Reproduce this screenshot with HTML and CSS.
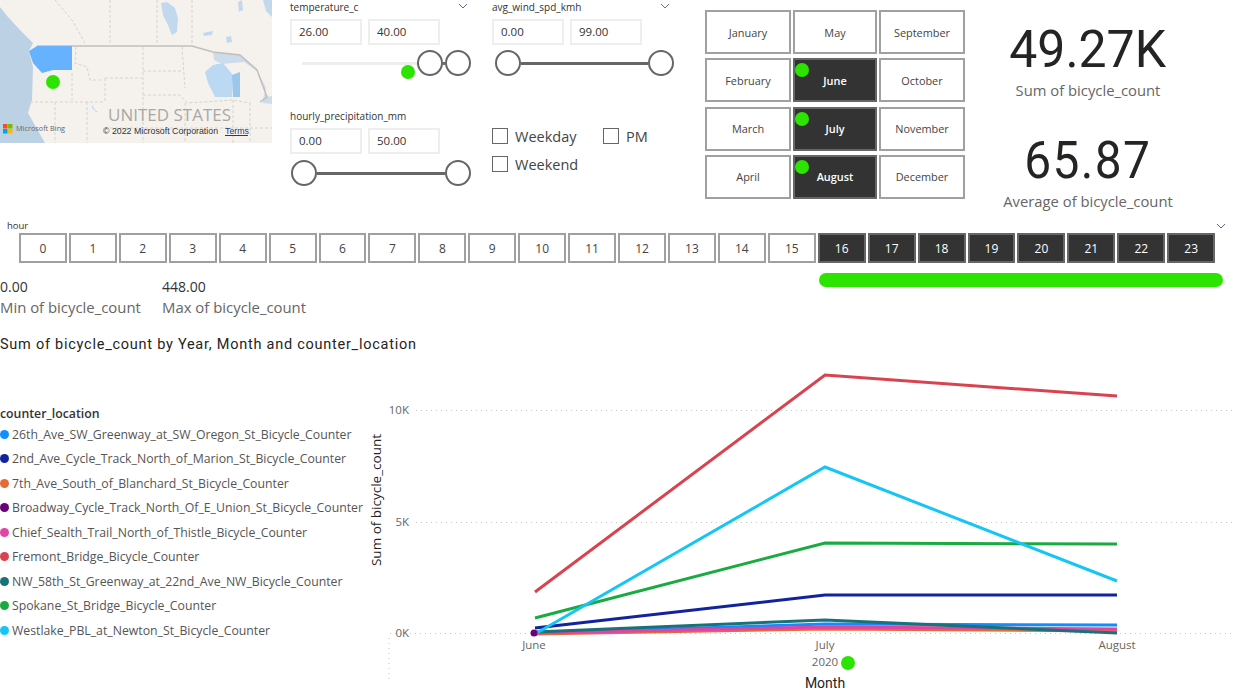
FILE: index.html
```html
<!DOCTYPE html>
<html lang="en">
<head>
<meta charset="utf-8">
<title>Bicycle counters</title>
<link rel="stylesheet" href="styles.css">
</head>
<body>
<div class="page">
  <section class="top">
    <div class="map">
      <svg class="map-svg" viewBox="0 0 272 143" width="272" height="143">
        <rect width="272" height="143" fill="#f5f2ee"/>
        <path d="M0 7 8 17 20 30 33 43 29 51 33 67 32 100 28 113 45 143H0Z" fill="#bdd1e4"/>
        <path d="M161 3l6-1 8 6 3 10-1 14-5 3-5-12-4-8ZM203 33l10-2-1 4-8 1ZM226 37l5-1 1 6-5 1ZM263 0h9V17l-6-6ZM238 2l4-2 1 10-4 2Z" fill="#c2d8ec"/>
        <path d="M213 52 240 55 257 70 267 97 272 96V104L262 103 266 88 258 72 244 62 222 64 214 60Z" fill="#ccdcea"/>
        <path d="M205 72 213 65 223 63 233 75 232 97 215 97 208 83Z" fill="#bcd9f3"/>
        <path d="M232 75 240 72 240 97 233 97Z" fill="#9cc7ec"/>
        <path d="M92 105l3 5 3 2-2 0-4-4Z" fill="#bcd6ee"/>
        <g class="map-lines">
          <path d="M55 0 72 20 85 43M110 0V44M157 0V44M192 0V44"/>
          <path d="M76 47 75 63 87 67 90 80H103M105 78V102M105 78H142M143 47V143M182 47 185 88M143 71H183"/>
          <path d="M143 95H180L187 103 233 100 250 103M30 102H103M55 102V143M87 102V143M72 73V100M185 103V143M233 100V143M250 103V143M105 128H272"/>
        </g>
        <path d="M37 46H192L213 52 240 55 257 70 267 97 260 102" fill="none" stroke="#c2beb9" stroke-width="1.500"/>
        <path d="M29 51 37 46H72V70H53L42 73 33 63Z" fill="#66b2ff"/>
        <text class="map-country" x="108" y="121">UNITED STATES</text>
        <rect x="3" y="124" width="4.500" height="4.500" fill="#f25022"/>
        <rect x="8" y="124" width="4.500" height="4.500" fill="#7fba00"/>
        <rect x="3" y="129" width="4.500" height="4.500" fill="#00a4ef"/>
        <rect x="8" y="129" width="4.500" height="4.500" fill="#ffb900"/>
        <text class="map-bing" x="16" y="131">Microsoft Bing</text>
        <text class="map-copy" x="103" y="134">© 2022 Microsoft Corporation</text>
        <text class="map-terms" x="225" y="134">Terms</text>
        <path d="M225 135.500H248" stroke="#1a3a8a" stroke-width="1"/>
      </svg>
      <span class="dot dot-map"></span>
    </div>

    <div class="filters">
      <div class="slicer">
        <div class="slicer-head"><span>temperature_c</span><svg class="chev" viewBox="0 0 10 6" width="10" height="6"><path d="M1 1l4 4 4-4" fill="none" stroke="#5a6a90"/></svg></div>
        <div class="inputs"><span class="input">26.00</span><span class="input">40.00</span></div>
        <div class="range range-temp">
          <span class="track track-idle"></span><span class="thumb"></span><span class="track track-short"></span><span class="thumb"></span>
          <span class="dot dot-temp"></span>
        </div>
      </div>
      <div class="slicer">
        <div class="slicer-head"><span>avg_wind_spd_kmh</span><svg class="chev" viewBox="0 0 10 6" width="10" height="6"><path d="M1 1l4 4 4-4" fill="none" stroke="#8a6a5a"/></svg></div>
        <div class="inputs"><span class="input">0.00</span><span class="input">99.00</span></div>
        <div class="range range-wind"><span class="thumb"></span><span class="track"></span><span class="thumb"></span></div>
      </div>
      <div class="slicer">
        <div class="slicer-head"><span>hourly_precipitation_mm</span></div>
        <div class="inputs"><span class="input">0.00</span><span class="input">50.00</span></div>
        <div class="range range-rain"><span class="thumb"></span><span class="track"></span><span class="thumb"></span></div>
      </div>
      <div class="checks">
        <label class="check check-weekday"><span class="box"></span>Weekday</label>
        <label class="check check-pm"><span class="box"></span>PM</label>
        <label class="check check-weekend"><span class="box"></span>Weekend</label>
      </div>
    </div>

    <div class="months">
      <div class="month">January</div><div class="month">May</div><div class="month">September</div>
      <div class="month">February</div><div class="month on">June<span class="dot dot-month"></span></div><div class="month">October</div>
      <div class="month">March</div><div class="month on">July<span class="dot dot-month"></span></div><div class="month">November</div>
      <div class="month">April</div><div class="month on">August<span class="dot dot-month"></span></div><div class="month">December</div>
    </div>

    <div class="kpis">
      <div class="kpi kpi-sum"><div class="kpi-value">49.27K</div><div class="kpi-label">Sum of bicycle_count</div></div>
      <div class="kpi kpi-avg"><div class="kpi-value">65.87</div><div class="kpi-label">Average of bicycle_count</div></div>
    </div>
  </section>

  <section class="hours">
    <div class="hours-head"><span>hour</span><svg class="chev" viewBox="0 0 10 6" width="10" height="6"><path d="M1 1l4 4 4-4" fill="none" stroke="#5a6a90"/></svg></div>
    <div class="hour-row">
      <div class="hour">0</div><div class="hour">1</div><div class="hour">2</div><div class="hour">3</div>
      <div class="hour">4</div><div class="hour">5</div><div class="hour">6</div><div class="hour">7</div>
      <div class="hour">8</div><div class="hour">9</div><div class="hour">10</div><div class="hour">11</div>
      <div class="hour">12</div><div class="hour">13</div><div class="hour">14</div><div class="hour">15</div>
      <div class="hour on">16</div><div class="hour on">17</div><div class="hour on">18</div><div class="hour on">19</div>
      <div class="hour on">20</div><div class="hour on">21</div><div class="hour on">22</div><div class="hour on">23</div>
    </div>
  </section>

  <section class="mid">
    <div class="stat stat-min"><div class="stat-value">0.00</div><div class="stat-label">Min of bicycle_count</div></div>
    <div class="stat"><div class="stat-value">448.00</div><div class="stat-label">Max of bicycle_count</div></div>
    <div class="green-bar"></div>
  </section>

  <h2 class="chart-title">Sum of bicycle_count by Year, Month and counter_location</h2>

  <section class="chart">
    <div class="legend">
      <div class="legend-title">counter_location</div>
      <div class="legend-item"><i class="c1"></i>26th_Ave_SW_Greenway_at_SW_Oregon_St_Bicycle_Counter</div>
      <div class="legend-item"><i class="c2"></i>2nd_Ave_Cycle_Track_North_of_Marion_St_Bicycle_Counter</div>
      <div class="legend-item"><i class="c3"></i>7th_Ave_South_of_Blanchard_St_Bicycle_Counter</div>
      <div class="legend-item"><i class="c4"></i>Broadway_Cycle_Track_North_Of_E_Union_St_Bicycle_Counter</div>
      <div class="legend-item"><i class="c5"></i>Chief_Sealth_Trail_North_of_Thistle_Bicycle_Counter</div>
      <div class="legend-item"><i class="c6"></i>Fremont_Bridge_Bicycle_Counter</div>
      <div class="legend-item"><i class="c7"></i>NW_58th_St_Greenway_at_22nd_Ave_NW_Bicycle_Counter</div>
      <div class="legend-item"><i class="c8"></i>Spokane_St_Bridge_Bicycle_Counter</div>
      <div class="legend-item"><i class="c9"></i>Westlake_PBL_at_Newton_St_Bicycle_Counter</div>
    </div>
    <div class="plot">
      <svg class="plot-svg" viewBox="362 362 875 330" width="875" height="330">
        <g class="grid">
          <path d="M416 409.500H1232M416 521.500H1232M390 632.500H1232M389 637V680"/>
        </g>
        <text class="tick" x="409" y="413" text-anchor="end">10K</text>
        <text class="tick" x="409" y="525" text-anchor="end">5K</text>
        <text class="tick" x="409" y="636" text-anchor="end">0K</text>
        <text class="axis-y" transform="translate(381 499) rotate(-90)" text-anchor="middle">Sum of bicycle_count</text>
        <g class="lines">
          <polyline stroke="#118dff" points="535,632 825,623 1117,624"/>
          <polyline stroke="#e66c37" points="535,633 825,628 1117,630"/>
          <polyline stroke="#e044a7" points="535,632 825,626 1117,628"/>
          <polyline stroke="#d9434f" points="535,591 825,374 1117,395"/>
          <polyline stroke="#1aab40" points="535,617 825,542 1117,543"/>
          <polyline stroke="#12239e" points="535,627 825,594 1117,594"/>
          <polyline stroke="#197278" points="535,631 825,619 1117,632"/>
          <polyline stroke="#15c6f4" points="535,633 825,466 1117,580"/>
        </g>
        <circle cx="534" cy="632" r="3.500" fill="#6b007b"/>
        <text class="tick" x="534" y="648" text-anchor="middle">June</text>
        <text class="tick" x="825" y="648" text-anchor="middle">July</text>
        <text class="tick" x="1117" y="648" text-anchor="middle">August</text>
        <text class="tick" x="825" y="665" text-anchor="middle">2020</text>
        <circle cx="848" cy="662" r="7" fill="#2de400"/>
        <text class="axis-x" x="825" y="687" text-anchor="middle">Month</text>
      </svg>
    </div>
  </section>
</div>
</body>
</html>
```
FILE: styles.css
```css
* { box-sizing: border-box; }
html, body { margin: 0; padding: 0; background: #fff; }
body { font-family: "Open Sans", "Noto Sans", sans-serif; color: #333; overflow: hidden; }
.page { width: 1237px; height: 692px; overflow: hidden; display: flex; flex-direction: column; }

.dot { position: absolute; width: 14px; height: 14px; border-radius: 50%; background: #2de400; }

.top { display: flex; height: 218px; flex: none; }
.map { position: relative; width: 272px; height: 143px; flex: none; }
.map-svg { display: block; }
.map-lines path { fill: none; stroke: #d6d2cc; stroke-width: 1; stroke-dasharray: 3 2; }
.dot-map { left: 46px; top: 75px; }
.map-country { font: 17px "Open Sans", sans-serif; fill: #a9a7a4; }
.map-bing { font: 7.300px "Open Sans", sans-serif; fill: #666; }
.map-copy { font: 8.800px "Liberation Sans", sans-serif; fill: #333; }
.map-terms { font: 8.800px "Liberation Sans", sans-serif; fill: #1a3a8a; }

.filters { width: 384px; margin-left: 18px; flex: none; display: grid; grid-template-columns: 202px 182px; grid-template-rows: 109px auto; }
.slicer-head { display: flex; justify-content: space-between; align-items: center; height: 14px; font-size: 10px; color: #333; width: 178px; }
.slicer-head .chev { margin-bottom: 2px; }
.chev { display: block; flex: none; }
.inputs { display: flex; gap: 6px; margin-top: 5px; }
.input { width: 72px; height: 26px; border: 2px solid #eee; padding-left: 7px; font-size: 11.500px; line-height: 22px; color: #333; }
.range { position: relative; display: flex; align-items: center; height: 26px; margin-top: 5px; }
.track { height: 3px; flex: 1; background: #666; }
.thumb { width: 26px; height: 26px; flex: none; border: 2.500px solid #666; border-radius: 50%; background: #fff; }
.track-idle { background: #eee; flex: none; width: 115px; margin-left: 12px; }
.track-short { flex: none; width: 2px; }
.range-wind { width: 179px; margin-left: 3px; }
.range-rain { width: 180px; margin-left: 1px; margin-top: 6px; }
.dot-temp { left: 111px; top: 15px; }

.checks { display: grid; grid-template-columns: 111px 1fr; grid-template-rows: 28px 28px; margin-top: 13px; }
.check { display: flex; align-items: center; gap: 7px; font-size: 14.500px; color: #444; }
.check-weekend { grid-column: 1 / span 2; }
.box { width: 16px; height: 16px; border: 1px solid #666; background: #fff; flex: none; }

.months { width: 260px; margin: 10px 0 0 31px; flex: none; display: grid; grid-template-columns: 86px 84px 86px; grid-auto-rows: 44px; column-gap: 2px; row-gap: 4.340px; height: 190px; }
.month { position: relative; display: flex; align-items: center; justify-content: center; border: 2px solid #a0a0a0; font-size: 10.900px; color: #444; }
.month.on { background: #333; border-color: #666; color: #fff; font-weight: 600; }
.dot-month { left: 0; top: 3px; }

.kpis { flex: 1; display: flex; flex-direction: column; align-items: center; padding: 22px 26px 0 0; }
.kpi { text-align: center; color: #252423; }
.kpi-value { font-family: Roboto, sans-serif; font-weight: 400; font-size: 52px; line-height: 56px; transform: scaleX(.96); }
.kpi-label { font-size: 14.800px; line-height: 20px; color: #666; margin-top: 2px; }
.kpi-avg { margin-top: 33px; }
.kpi-avg .kpi-value { letter-spacing: 1.500px; transform: scaleX(.92); }
.kpi-avg .kpi-label { margin-top: 2px; }

.hours { flex: none; padding-left: 7px; }
.hours-head { display: flex; justify-content: space-between; align-items: center; height: 15px; font-size: 9.500px; color: #333; padding-right: 11px; }
.hour-row { display: flex; gap: 2px; width: 1196px; margin-left: 12px; height: 30px; }
.hour { flex: 1; display: flex; align-items: center; justify-content: center; border: 2px solid #a0a0a0; font-size: 12px; color: #444; }
.hour.on { background: #333; border-color: #666; color: #fff; }

.mid { display: flex; flex: none; height: 46px; margin-top: 10px; }
.stat { padding-top: 4px; }
.stat-min { width: 162px; }
.stat-value { font-size: 14px; line-height: 20px; color: #333; }
.stat-label { font-size: 14.900px; line-height: 21px; color: #666; }
.green-bar { width: 404px; height: 14px; border-radius: 7px; background: #2de400; margin-left: auto; margin-right: 14px; }

.chart-title { flex: none; margin: 16px 0 0; font: 400 14.500px/20px Roboto, sans-serif; color: #252423; letter-spacing: .75px; }

.chart { flex: 1; display: flex; min-height: 0; }
.legend { width: 362px; flex: none; padding-top: 50px; }
.legend-title { font-size: 12.300px; font-weight: 600; line-height: 17px; color: #333; }
.legend-item { display: flex; align-items: center; height: 24.500px; font-size: 12.280px; color: #555; white-space: nowrap; }
.legend-item i { width: 9px; height: 9px; border-radius: 50%; margin-right: 3px; flex: none; }
.c1 { background: #118dff; } .c2 { background: #12239e; } .c3 { background: #e66c37; }
.c4 { background: #6b007b; } .c5 { background: #e044a7; } .c6 { background: #d9434f; }
.c7 { background: #197278; } .c8 { background: #1aab40; } .c9 { background: #15c6f4; }

.plot { flex: 1; margin-top: 8px; }
.plot-svg { display: block; }
.grid path { fill: none; stroke: #c8c6c4; stroke-width: 1; stroke-dasharray: 1 4; }
.tick { font: 11.500px "Open Sans", sans-serif; fill: #666; }
.axis-y { font: 13.500px "Open Sans", sans-serif; fill: #252423; }
.axis-x { font: 400 14px Roboto, sans-serif; fill: #252423; }
.lines polyline { fill: none; stroke-width: 3; }
```
